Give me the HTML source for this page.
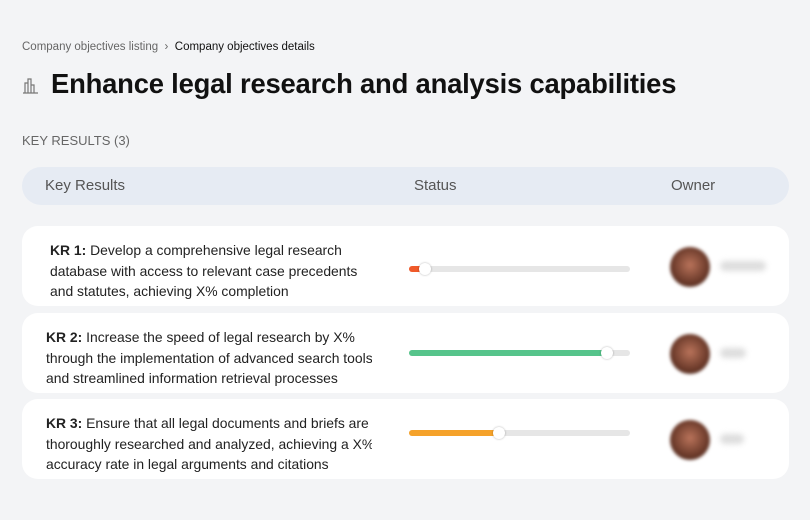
<!DOCTYPE html>
<html><head><style>
*{margin:0;padding:0;box-sizing:border-box}
body{width:810px;height:520px;background:#f3f4f6;font-family:"Liberation Sans",sans-serif;position:relative;overflow:hidden;color:#111}
.a{position:absolute}
.crumb{left:22px;top:41px;font-size:11.5px;color:#666}
.crumb b{font-weight:normal;color:#111}
h1{position:absolute;left:51px;top:68px;font-size:27.4px;font-weight:bold;color:#111;letter-spacing:-0.2px}
.kr{left:22px;top:133px;font-size:13px;color:#666}
.hdr{left:22px;top:167px;width:767px;height:38px;background:#e6ebf3;border-radius:19px;font-size:15px;color:#555}
.hdr span{position:absolute;top:10px}
.row{left:22px;width:767px;height:80px;background:#fff;border-radius:16px}
.txt{position:absolute;left:24px;width:326px;top:14px;font-size:13.9px;line-height:20.5px;white-space:nowrap;overflow:hidden;color:#222}
.bar{position:absolute;left:387px;width:221px;height:6px;border-radius:3px;background:#e6e6e6;top:37px}
.fill{position:absolute;left:0;top:0;height:6px;border-radius:3px}
.knob{position:absolute;top:-3px;width:12px;height:12px;border-radius:50%;background:#fff;box-shadow:0 0 2px rgba(0,0,0,.3)}
.av{position:absolute;left:648px;top:21px;width:40px;height:40px;border-radius:50%;background:radial-gradient(circle at 50% 45%,#b9735a,#6b3a2a 60%,#3a2018);filter:blur(1.5px)}
.nm{position:absolute;left:698px;top:35px;width:46px;height:10px;background:#ddd;border-radius:5px;filter:blur(3px)}
</style></head><body>
<div class="a crumb">Company objectives listing &nbsp;›&nbsp; <b>Company objectives details</b></div>
<svg class="a" style="left:22px;top:76px" width="17" height="18" viewBox="0 0 17 18" fill="none" stroke="#777" stroke-width="1.2"><path d="M3 17V7h3v10M6 17V3h3v14M9 17V9h3v8M1 17h15"/></svg>
<h1>Enhance legal research and analysis capabilities</h1>
<div class="a kr">KEY RESULTS (3)</div>
<div class="a hdr"><span style="left:23px">Key Results</span><span style="left:392px">Status</span><span style="left:649px">Owner</span></div>
<div class="a row" style="top:226px"><div class="txt" style="left:28px"><b>KR 1:</b> Develop a comprehensive legal research<br>database with access to relevant case precedents<br>and statutes, achieving X% completion</div>
<div class="bar" style="top:40px"><div class="fill" style="width:16px;background:#f05a2a"></div><div class="knob" style="left:10px"></div></div><div class="av"></div><div class="nm"></div></div>
<div class="a row" style="top:313px"><div class="txt"><b>KR 2:</b> Increase the speed of legal research by X%<br>through the implementation of advanced search tools<br>and streamlined information retrieval processes</div>
<div class="bar"><div class="fill" style="width:199px;background:#56c48b"></div><div class="knob" style="left:192px"></div></div><div class="av"></div><div class="nm" style="width:26px"></div></div>
<div class="a row" style="top:399px"><div class="txt"><b>KR 3:</b> Ensure that all legal documents and briefs are<br>thoroughly researched and analyzed, achieving a X%<br>accuracy rate in legal arguments and citations</div>
<div class="bar" style="top:31px"><div class="fill" style="width:90px;background:#f5a22a"></div><div class="knob" style="left:84px"></div></div><div class="av"></div><div class="nm" style="width:24px"></div></div>
</body></html>
